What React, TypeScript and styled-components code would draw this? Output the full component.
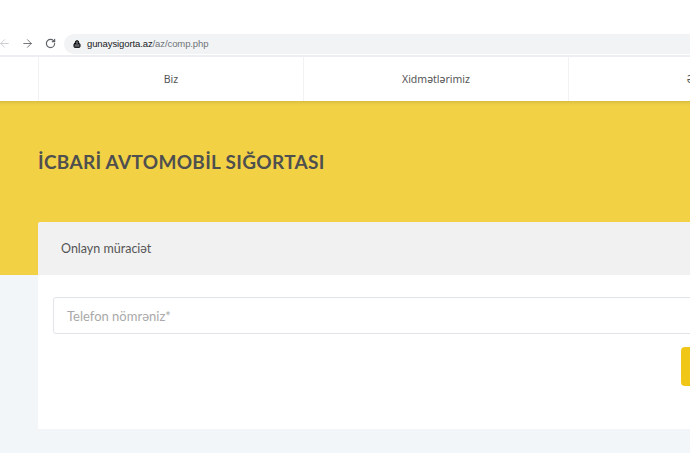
import { createGlobalStyle, styled } from "styled-components";
import { ArrowLeft, ArrowRight, RotateCw, Lock } from "lucide-react";

const GlobalStyle = createGlobalStyle`
  html, body {
    margin: 0;
    padding: 0;
    background: #ffffff;
    overflow: hidden;
  }
  * {
    box-sizing: border-box;
  }
  body {
    font-family: "Lato", "Open Sans", sans-serif;
  }
`;

const navItems = ["Biz", "Xidmətlərimiz", "Əlaqə"];

const App = (): JSX.Element => {
  return (
    <Page>
      <GlobalStyle />
      <BrowserBar>
        <NavButton faded>
          <ArrowLeft size={13} strokeWidth={1.6} />
        </NavButton>
        <NavButton>
          <ArrowRight size={13} strokeWidth={1.6} />
        </NavButton>
        <NavButton>
          <RotateCw size={11} strokeWidth={2.6} />
        </NavButton>
        <Omnibox>
          <Lock size={8} strokeWidth={3} fill="#5f6368" />
          <span className="host">gunaysigorta.az</span>
          <span className="path">/az/comp.php</span>
        </Omnibox>
      </BrowserBar>
      <SiteNav>
        <div className="spacer" />
        {navItems.map((item) => (
          <NavItem key={item}>{item}</NavItem>
        ))}
      </SiteNav>
      <Hero>
        <Title>İCBARİ AVTOMOBİL SIĞORTASI</Title>
      </Hero>
      <FormSection>
        <Card>
          <CardHeader>Onlayn müraciət</CardHeader>
          <CardBody>
            <PhoneInput type="text" placeholder="Telefon nömrəniz*" />
            <SubmitButton type="submit">Göndər</SubmitButton>
          </CardBody>
        </Card>
      </FormSection>
    </Page>
  );
};

const Page = styled.div`
  width: 690px;
  height: 462px;
  overflow: hidden;
  background: #ffffff;
`;

const BrowserBar = styled.div`
  display: flex;
  align-items: center;
  height: 57px;
  padding: 34px 0 2px 0;
  border-bottom: 2px solid #eceef1;
  margin-left: -6px;
`;

const NavButton = styled.span<{ faded?: boolean }>`
  display: flex;
  align-items: center;
  justify-content: center;
  width: 21px;
  height: 20px;
  color: ${(p) => (p.faded ? "#c4c7ca" : "#5f6368")};
  & + & {
    margin-left: 2px;
  }
`;

const Omnibox = styled.div`
  flex: 1;
  display: flex;
  align-items: center;
  gap: 5px;
  height: 20px;
  margin-left: 3px;
  padding-left: 9px;
  border-radius: 10px 0 0 10px;
  background: #f1f3f4;
  font-family: "Liberation Sans", Arial, sans-serif;
  font-size: 9.5px;
  letter-spacing: -0.1px;

  .host {
    color: #202124;
    margin-left: 1px;
  }
  .path {
    color: #6f7378;
    margin-left: -5px;
  }
`;

const SiteNav = styled.nav`
  display: flex;
  height: 44px;
  background: #ffffff;

  .spacer {
    width: 38px;
    flex-shrink: 0;
  }
`;

const NavItem = styled.div`
  width: 265px;
  flex-shrink: 0;
  display: flex;
  align-items: center;
  justify-content: center;
  border-left: 1px solid #f2f2f2;
  color: #555555;
  font-family: "Noto Sans", sans-serif;
  font-size: 10.5px;
`;

const Hero = styled.section`
  height: 174px;
  background: linear-gradient(#d8bd3e 0px, #ecce44 3px, #f2d244 6px);
  padding: 49px 0 0 38px;
`;

const Title = styled.h1`
  margin: 0;
  color: #4f4f4f;
  font-family: "Lato", sans-serif;
  font-weight: 700;
  font-size: 19px;
  letter-spacing: 0.3px;
`;

const FormSection = styled.section`
  display: flex;
  flex-direction: column;
  background: #f3f6f9;
  padding: 0 0 0 38px;
  height: 178px;
`;

const Card = styled.div`
  width: 768px;
  margin-top: -53px;
  background: #ffffff;
  border-radius: 3px 3px 0 0;
`;

const CardHeader = styled.div`
  height: 53px;
  display: flex;
  align-items: center;
  padding-left: 23px;
  background: #f1f1f1;
  border-radius: 3px 3px 0 0;
  color: #555555;
  font-family: "Lato", sans-serif;
  font-size: 12.5px;
`;

const CardBody = styled.div`
  display: flex;
  flex-direction: column;
  align-items: flex-end;
  padding: 22px 15px 43px 15px;
`;

const PhoneInput = styled.input`
  width: 100%;
  height: 37px;
  border: 1px solid #e1e4e8;
  border-radius: 3px;
  padding: 0 13px;
  outline: none;
  font-family: "Lato", sans-serif;
  font-size: 13px;
  color: #333;

  &::placeholder {
    color: #a9a9a9;
  }
`;

const SubmitButton = styled.button`
  margin-top: 13px;
  width: 110px;
  height: 39px;
  border: none;
  border-radius: 4px;
  background: #f1c717;
  color: #ffffff;
  font-family: "Lato", sans-serif;
  font-weight: 700;
  font-size: 13px;
  cursor: pointer;
`;

export default App;
